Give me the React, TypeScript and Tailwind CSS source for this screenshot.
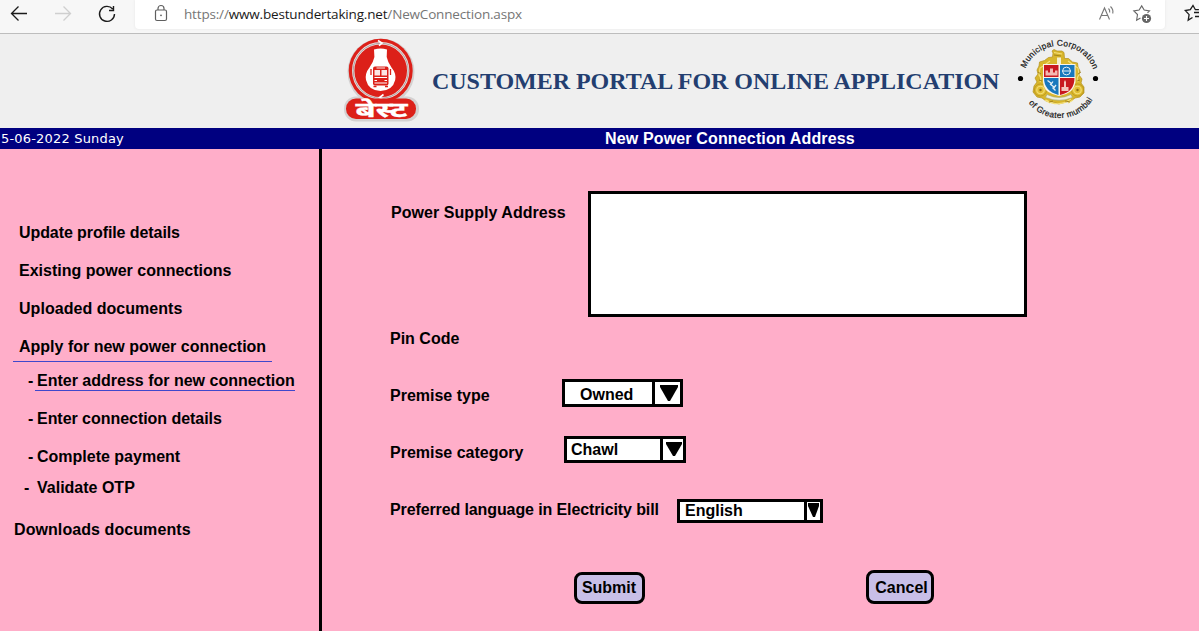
import type { ReactNode } from "react";

function Toolbar() {
  return (
    <div className="flex h-[34px] shrink-0 items-start border-b border-[#bdbdbd] bg-[#f7f7f7] font-['Open_Sans',sans-serif]">
      <svg className="h-[30px] w-[135px] shrink-0" viewBox="0 0 135 30" fill="none" strokeWidth="1.3">
        <path d="M27 13.500H11.500M18.500 6.500l-7 7 7 7" stroke="#1b1b1b" />
        <path d="M55 13.500h15.500M63.500 6.500l7 7-7 7" stroke="#cfcfcf" />
        <path d="M112.700 9a7.500 7.500 0 1 0 1.800 5M113.500 6v4.500H109" stroke="#1b1b1b" strokeWidth="1.400" />
      </svg>
      <div className="flex h-[29px] w-[1030px] shrink-0 items-start rounded-b-[4px] bg-white shadow-[0_0_3px_#e4e4e4]">
        <svg className="ml-[18px] h-[29px] w-[16px]" viewBox="0 0 16 29" fill="none" stroke="#5f5f5f" strokeWidth="1.200">
          <rect x="2.500" y="10" width="11" height="10.500" rx="1.500" />
          <path d="M5 10V8.500a3 3 0 0 1 6 0V10" />
          <circle cx="8" cy="15.300" r=".9" fill="#5f5f5f" stroke="none" />
        </svg>
        <span className="ml-[15px] w-[345px] whitespace-nowrap text-[13.500px] leading-[29px] tracking-[-0.170px] text-[#767676]">
          https://<span className="text-[#1a1a1a]">www.bestundertaking.net</span>/NewConnection.aspx
        </span>
        <svg className="ml-[568px] h-[29px] w-[60px]" viewBox="1097 0 60 29" fill="none" stroke="#777" strokeWidth="1.100">
          <path d="M1099.500 19.500l5-11.500 5 11.500M1101.200 15.500h6.600M1108.500 8.500q1.600 1.500 1.200 4M1110.500 6.500q3.200 3 2.200 7" />
          <path d="M1140.500 18l-3.900 2.300.9-5.800-3.700-3.600 5.300-.8 2.600-4.200 2.500 4.200 5.300.8-2 2" stroke="#666" />
          <circle cx="1146.500" cy="18.500" r="4.600" fill="#666" stroke="none" />
          <path d="M1144 18.500h5M1146.500 16v5" stroke="#fff" />
        </svg>
      </div>
      <svg className="h-[30px] w-[34px] shrink-0" viewBox="1165 0 34 30" fill="none" stroke="#1b1b1b" strokeWidth="1.300">
        <path d="M1192.500 17.500l-4.300 2.600.9-5.500-3.800-4.100 5-.8 2.700-4.300 2.400 4.300h3.500M1194 12.500h5M1195 16.500h4" />
      </svg>
    </div>
  );
}

function BestLogo() {
  return (
    <svg className="h-[94px] w-[95px] shrink-0" viewBox="335 34 95 94">
      <rect x="344" y="96.500" width="75" height="25" rx="12" fill="#d4d1d1" />
      <circle cx="381" cy="72" r="33.500" fill="#d4d1d1" />
      <circle cx="380.700" cy="70.800" r="32" fill="#dc2019" />
      <circle cx="380.700" cy="70.800" r="27.500" fill="none" stroke="#e9dedd" strokeWidth="2.400" />
      <circle cx="380.700" cy="70.800" r="27.500" fill="none" stroke="#9a8a89" strokeWidth=".7" />
      <path d="M374 49.500q6.500-2 13 0l-.3 7.500q1 5 4.800 10.500 5 6 3.700 12.500-2.500 10.500-14.700 11-12-.5-14.500-11-1.300-6.500 3.500-12.500 3.900-5.500 4.900-10.500z" fill="#fff" />
      <rect x="373" y="66.500" width="15.500" height="19" rx="2" fill="#dc2019" />
      <path d="M374.500 70h5.500v5.500h-5.500zM381.500 70h5.500v5.500h-5.500zM376.500 67.500h8.500v1h-8.500z" fill="#fbe6e4" />
      <path d="M374.500 77.500h12.500M374.500 80.500h2.500M384.500 80.500h2.500M374.500 83h12.500" stroke="#fff" strokeWidth="1.200" />
      <path d="M371 69v6M390.500 69v6M373.500 86.500h3M385 86.500h3" stroke="#dc2019" strokeWidth="1.300" />
      <path d="M378 40.500l4 2.500-3 2.700M383.500 94.500l-4 3 3.500 2.500" fill="none" stroke="#fff" strokeWidth="1.600" />
      <rect x="346" y="98.500" width="70" height="20.500" rx="10" fill="#dc2019" />
      <text x="355.500" y="116.500" textLength="52" lengthAdjust="spacingAndGlyphs" fill="#fff" stroke="#fff" strokeWidth=".3" className="font-['Noto_Sans',sans-serif] text-[21px] font-bold">बेस्ट</text>
    </svg>
  );
}

function CorporationSeal() {
  return (
    <svg className="h-[94px] w-[95px] shrink-0" viewBox="1010 34 95 94">
      <defs>
        <path id="upper-arc" d="M1025.500 68.500A36.500 36.500 0 0 1 1094 71" />
        <path id="lower-arc" d="M1028.500 103A39 39 0 0 0 1094 97" />
      </defs>
      <g className="font-['Liberation_Sans',Arial,sans-serif] text-[8.400px]" fill="#151515" stroke="#151515" strokeWidth=".2">
        <text><textPath href="#upper-arc" textLength="87">Municipal Corporation</textPath></text>
        <text><textPath href="#lower-arc" textLength="75">of Greater mumbai</textPath></text>
      </g>
      <circle cx="1020.500" cy="78.500" r="2.600" />
      <circle cx="1095.500" cy="78.500" r="2.600" />
      <path d="M1052 51l2-1.500 3 1.500h5l2 1.500.5 6h4l4 3.500 5 1 .5 4 2 4-1 4 3 4-1 4 3 4v6l-4 4-5 1-4 3-5 1-7 2-7-2-6-1-4-3-5-1-4-5 1-6 3-4-2-4 3-4-1-4 2-4 .5-4 5-1.500 4-3 4-.5.500-4z" fill="#d8b62c" stroke="#b3901d" strokeWidth=".7" strokeLinejoin="round" />
      <g fill="#dfbd32" stroke="#a98516" strokeWidth=".6">
        <circle cx="1040.500" cy="90" r="6" /><circle cx="1077.500" cy="90" r="6" />
      </g>
      <g fill="none" stroke="#f4df77" strokeWidth="1.100">
        <circle cx="1040.500" cy="90" r="3.700" /><circle cx="1077.500" cy="90" r="3.700" />
        <path d="M1040 82q2-4-1-7l1-7 6-4 4-3M1078 82q-2-4 1-7l-1-7-6-4-4-3M1046 100q12 8 25-1M1054 52.500l8 1.500M1050 103l-5-3M1068 103l5-3" />
      </g>
      <path d="M1054 55l7 1M1043 64l3 2M1075 64l-3 2M1038 72l3 2M1081 72l-3 2M1039 80l3 1M1080 80l-3 1M1049 102l4-1M1065 101l5 1" stroke="#977715" strokeWidth=".8" />
      <circle cx="1040.500" cy="90" r="1.200" fill="#8f7014" /><circle cx="1077.500" cy="90" r="1.200" fill="#8f7014" />
      <path d="M1057 57.500h4v7h-4z" fill="#f4efcf" />
      <path d="M1043 64h32.500v18q-1.500 9-9.500 12l-7 2-6.500-2q-9-3-9.500-12z" fill="#f8f4e8" />
      <path d="M1044 65h14.500v12H1044zM1060 78h14.500q0 14-14.500 17z" fill="#c8181e" />
      <path d="M1060 65h14.500v12H1060zM1044 78h14.500v17Q1044 91 1044 78z" fill="#1878bd" />
      <path d="M1045.500 75.500v-5h2.500v2h2v-4h3v4h2v-2h2.500v5z" fill="#f3b9b2" />
      <circle cx="1066.500" cy="71" r="3.900" fill="none" stroke="#e5eef5" /><path d="M1062 71h9" stroke="#e5eef5" />
      <path d="M1047.500 80.500l4 3M1050 84l4 3M1052.500 87.500l3 3M1053 81.500l-2 3M1056 85l-3 4" stroke="#e1edf5" strokeWidth="1.300" />
      <path d="M1061.500 91v-4h2.500v-5l1-2 1 2v5h2.500v4z" fill="#f4c4bb" />
      <path d="M1047 94.500q12 6 24 0l1.500 3q-13 5.500-27 0z" fill="#eeeedd" stroke="#9fa87b" strokeWidth=".6" />
    </svg>
  );
}

function Header() {
  return (
    <header className="flex h-[94px] shrink-0 items-center bg-[#efefef] pl-[335px]">
      <BestLogo />
      <h1 className="ml-[2px] w-[578px] whitespace-nowrap font-['Liberation_Serif',serif] text-[24px] font-bold tracking-[-0.030px] text-[#233e70]">
        CUSTOMER PORTAL FOR ONLINE APPLICATION
      </h1>
      <CorporationSeal />
    </header>
  );
}

function Sidebar() {
  return (
    <nav className="flex w-[322px] shrink-0 flex-col border-r-3 border-black pt-[64px] leading-[40px]">
      <a className="h-[38px] pl-[19px] tracking-[-0.080px]">Update profile details</a>
      <a className="h-[38px] pl-[19px]">Existing power connections</a>
      <a className="h-[38px] pl-[19px] tracking-[0.040px]">Uploaded documents</a>
      <a className="ml-[13px] h-[35px] w-[259px] border-b border-[#3f48cc] pl-[6px]">Apply for new power connection</a>
      <div className="flex h-[37px] pl-[28px] leading-[38px]">
        <span className="w-[7px]">-</span>
        <a className="h-[29px] w-[260px] border-b border-[#3f48cc] pl-[2px]">Enter address for new connection</a>
      </div>
      <div className="flex h-[38px] pl-[28px]"><span className="w-[9px]">-</span><a className="tracking-[-0.040px]">Enter connection details</a></div>
      <div className="flex h-[38px] pl-[28px]"><span className="w-[9px]">-</span><a>Complete payment</a></div>
      <div className="flex h-[24px] pl-[24px] leading-[26px]"><span className="w-[13px]">-</span><a>Validate OTP</a></div>
      <a className="pl-[14px] leading-[62px] tracking-[0.080px]">Downloads documents</a>
    </nav>
  );
}

function Select({ children, className, arrowClass, points }: { children: ReactNode; className: string; arrowClass: string; points: string }) {
  return (
    <button className={`flex border-3 border-black bg-white text-left ${className}`}>
      <span className="flex-1">{children}</span>
      <span className={`h-full border-l-3 border-black ${arrowClass}`}>
        <svg className="h-full w-full"><polygon points={points} /></svg>
      </span>
    </button>
  );
}

export default function App() {
  return (
    <div className="flex h-[631px] w-[1199px] flex-col overflow-hidden bg-[#ffaec9] font-['Liberation_Sans',Arial,sans-serif] text-[16px] text-black">
      <Toolbar />
      <Header />
      <div className="flex h-[21px] shrink-0 bg-[#000080] leading-[21px] text-white">
        <span className="w-[605px] pl-px font-['DejaVu_Sans',Verdana,sans-serif] text-[13px] tracking-[0.180px]">5-06-2022 Sunday</span>
        <h2 className="whitespace-pre font-bold tracking-[0.150px]">New Power Connection Address</h2>
      </div>
      <div className="flex flex-1 font-bold">
        <Sidebar />
        <main className="flex flex-1 flex-col pl-[68px] pt-[42px]">
          <div className="flex h-[126px]">
            <label className="w-[198px] pl-px leading-[44px] tracking-[0.050px]">Power Supply Address</label>
            <textarea className="h-[126px] w-[439px] resize-none border-3 border-black bg-white" />
          </div>
          <label className="mb-[6px] leading-[44px]">Pin Code</label>
          <div className="flex h-[57px]">
            <label className="w-[172px] leading-[58px]">Premise type</label>
            <Select className="mt-[12px] h-[28px] w-[121px] pl-[15px] leading-[25px]" arrowClass="w-[28px]" points="5,3 23,3 23,5 15,19 13,19 5,5">Owned</Select>
          </div>
          <div className="flex h-[57px]">
            <label className="w-[174px] leading-[58px]">Premise category</label>
            <Select className="mt-[12px] h-[27px] w-[122px] pl-[4px] leading-[21px]" arrowClass="w-[23px]" points="3,3 19,3 19,5 12,17 10,17 3,5">Chawl</Select>
          </div>
          <div className="flex h-[57px]">
            <label className="w-[287px] leading-[58px] tracking-[-0.110px]">Preferred language in Electricity bill</label>
            <Select className="mt-[18px] h-[24px] w-[146px] pl-[5px] leading-[17px]" arrowClass="w-[16px]" points="1,1 12,1 12,4 8,15 6,15 1,4">English</Select>
          </div>
          <div className="flex pl-[184px]">
            <button className="mt-[34px] h-[32px] w-[71px] rounded-[8px] border-3 border-black bg-[#c8bfe7] pr-px text-center leading-[24px]">Submit</button>
            <button className="ml-[221px] mt-[32px] h-[34px] w-[68px] rounded-[8px] border-3 border-black bg-[#c8bfe7] pl-[3px] pt-px text-center leading-[28px]">Cancel</button>
          </div>
        </main>
      </div>
    </div>
  );
}
